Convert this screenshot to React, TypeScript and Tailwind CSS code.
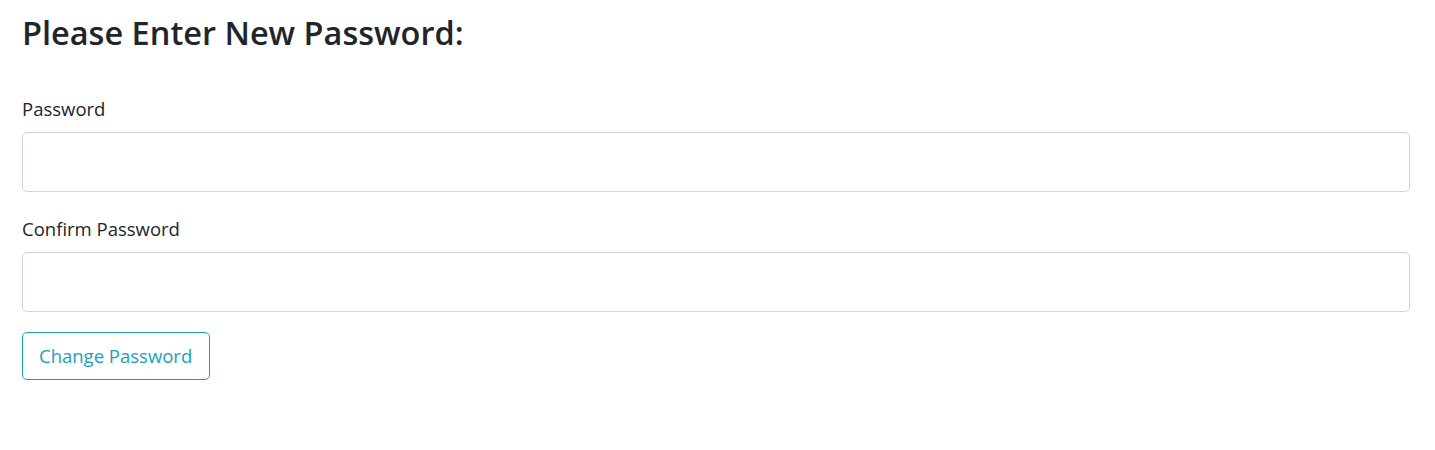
import { useState } from "react";

export default function App() {
  const [password, setPassword] = useState("");
  const [confirm, setConfirm] = useState("");

  return (
    <div className="min-h-[450px] bg-white pl-[22px] pr-[25px] pt-[13px] text-[#212529] font-['Open_Sans',sans-serif]">
      <h2 className="text-[32.5px] font-semibold leading-[40px]">Please Enter New Password:</h2>

      <form className="mt-[44px]" onSubmit={(e) => e.preventDefault()}>
        <div className="mb-[25px]">
          <label className="block text-[18.5px] leading-[24px] mb-[11px]">Password</label>
          <input
            type="password"
            className="block w-full h-[60px] border border-[#ced4da] rounded-[5px] px-3 text-[18px] outline-none"
            value={password}
            onChange={(e) => setPassword(e.target.value)}
          />
        </div>
        <div className="mb-[20px]">
          <label className="block text-[18.5px] leading-[24px] mb-[11px]">Confirm Password</label>
          <input
            type="password"
            className="block w-full h-[60px] border border-[#ced4da] rounded-[5px] px-3 text-[18px] outline-none"
            value={confirm}
            onChange={(e) => setConfirm(e.target.value)}
          />
        </div>
        <button
          type="submit"
          className="h-[48px] pl-4 pr-[17px] border border-[#17a2b8] rounded-[5px] text-[#17a2b8] text-[18.5px] leading-[24px]"
        >
          Change Password
        </button>
      </form>
    </div>
  );
}
